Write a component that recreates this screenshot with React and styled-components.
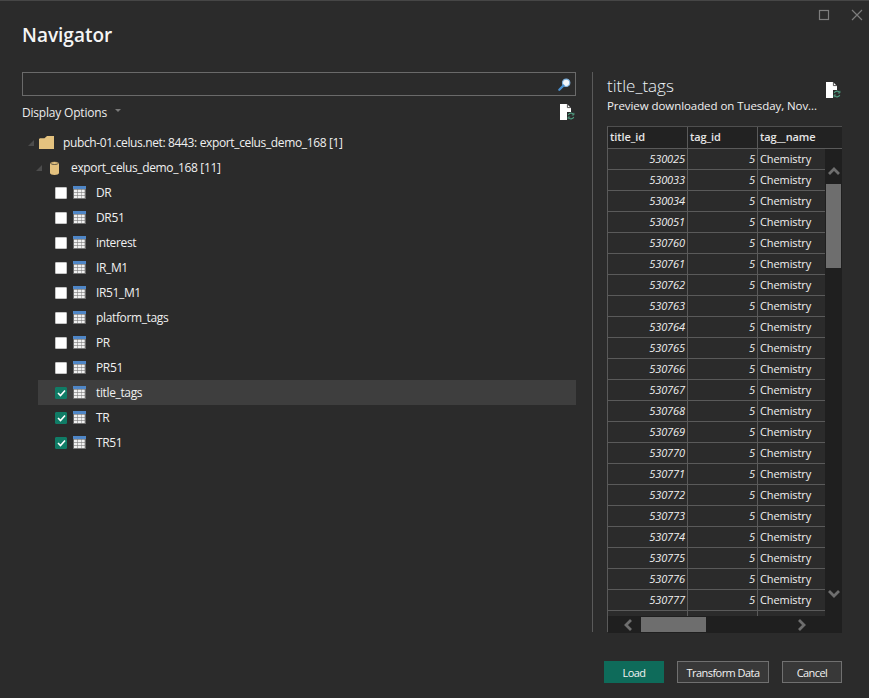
import styled, { createGlobalStyle } from "styled-components";

const GlobalStyle = createGlobalStyle`
  html, body {
    margin: 0;
    padding: 0;
    background: #2b2b2b;
  }
  * {
    box-sizing: border-box;
  }
`;

const Dialog = styled.div`
  width: 869px;
  height: 698px;
  background: #2b2b2b;
  color: #f2f2f2;
  font-family: "Open Sans", "Noto Sans", sans-serif;
  font-size: 12px;
  border-top: 1px solid #464646;
  display: flex;
  flex-direction: column;
  overflow: hidden;
`;

const WindowBar = styled.div`
  height: 28px;
  display: flex;
  justify-content: flex-end;
  align-items: center;
  gap: 21px;
  padding: 0 6px 0 0;
`;

const WindowButton = styled.svg`
  width: 12px;
  height: 12px;
  display: block;
  fill: none;
  stroke: #7d7d7d;
  stroke-width: 1.2;
`;

const Title = styled.h1`
  margin: 0 0 23px 22px;
  height: 20px;
  line-height: 13px;
  font-size: 19px;
  font-weight: 600;
  color: #f5f5f5;
`;

const Main = styled.div`
  display: flex;
  height: 560px;
  padding-left: 22px;
`;

const LeftPane = styled.div`
  width: 554px;
  display: flex;
  flex-direction: column;
`;

const SearchBox = styled.div`
  height: 24px;
  border: 1px solid #6a6a6a;
  display: flex;
  align-items: center;
  justify-content: flex-end;
  padding-right: 4px;
`;

const OptionsRow = styled.div`
  height: 34px;
  display: flex;
  align-items: center;
  justify-content: space-between;
  padding: 0 1px 2px 0;
`;

const DisplayOptions = styled.div`
  display: flex;
  align-items: center;
  gap: 8px;
  font-size: 12px;
  letter-spacing: -0.2px;
  color: #ededed;
`;

const Caret = styled.span`
  width: 0;
  height: 0;
  border-left: 3px solid transparent;
  border-right: 3px solid transparent;
  border-top: 3px solid #7a7a7a;
  margin-top: -3px;
`;

const Tree = styled.div`
  display: flex;
  flex-direction: column;
`;

const TreeRow = styled.div`
  height: 25px;
  flex: none;
  display: flex;
  align-items: center;
  margin-left: 6px;
  padding-left: ${(p) => p.$indent}px;
  font-size: 12px;
  letter-spacing: -0.36px;
  color: #f0f0f0;
`;

const TableRow = styled(TreeRow)`
  margin-left: 16px;
  gap: 6px;
  background: ${(p) => (p.$selected ? "#3e3e3e" : "transparent")};
`;

const Expander = styled.span`
  width: 0;
  height: 0;
  margin-right: ${(p) => p.$gap}px;
  border-style: solid;
  border-width: 0 0 6px 6px;
  border-color: transparent transparent #4c4c4c transparent;
`;

const Check = styled.span`
  width: 12px;
  height: 12px;
  flex: none;
  border-radius: 1px;
  display: flex;
  align-items: center;
  justify-content: center;
  background: ${(p) => (p.$checked ? "#107c66" : "#ffffff")};
  border: 1px solid ${(p) => (p.$checked ? "#107c66" : "#c4c4c4")};
`;

const RowLabel = styled.span`
  margin-left: ${(p) => p.$gap}px;
  white-space: nowrap;
`;

const Divider = styled.div`
  width: 1px;
  height: 560px;
  margin: 0 14px 0 16px;
  background: #5a5a5a;
`;

const RightPane = styled.div`
  width: 235px;
  display: flex;
  flex-direction: column;
`;

const PreviewHead = styled.div`
  height: 54px;
  display: flex;
  justify-content: space-between;
`;

const PreviewTitle = styled.div`
  font-size: 17px;
  line-height: 24px;
  margin-top: 2px;
  font-weight: 300;
  color: #eef3f7;
`;

const PreviewSub = styled.div`
  font-size: 11.5px;
  line-height: 16px;
  letter-spacing: -0.07px;
  color: #f0f0f0;
`;

const HeadIcon = styled.div`
  margin: 10px 1px 0 0;
`;

const GridFrame = styled.div`
  height: 506px;
  display: grid;
  grid-template-columns: 217px 17px;
  grid-template-rows: 22px 467px 17px;
  background: #1f1f1f;
  border-top: 1px solid #4f4f4f;
  border-left: 1px solid #5a5a5a;
`;

const HeaderRow = styled.div`
  grid-column: 1 / 3;
  display: grid;
  grid-template-columns: 80px 70px 1fr;
  border-bottom: 1px solid #5a5a5a;
  background: #222222;
`;

const HeaderCell = styled.div`
  padding-left: 2px;
  line-height: 20px;
  font-size: 11px;
  font-weight: 600;
  letter-spacing: -0.1px;
  color: #e6e6e6;
  border-right: ${(p) => (p.$last ? "none" : "1px solid #5a5a5a")};
`;

const Rows = styled.div`
  overflow: hidden;
  background: #2b2b2b;
`;

const DataRow = styled.div`
  height: 21px;
  display: grid;
  grid-template-columns: 80px 70px 1fr;
  border-bottom: 1px solid #5a5a5a;
`;

const Cell = styled.div`
  padding: 0 2px;
  line-height: 20px;
  font-size: 11px;
  letter-spacing: -0.1px;
  font-style: ${(p) => (p.$num ? "italic" : "normal")};
  text-align: ${(p) => (p.$num ? "right" : "left")};
  color: #f0f0f0;
  border-right: ${(p) => (p.$last ? "none" : "1px solid #5a5a5a")};
`;

const VScroll = styled.div`
  background: #1f1f1f;
  display: flex;
  flex-direction: column;
  align-items: center;
  padding-top: 18px;
`;

const VThumb = styled.div`
  width: 15px;
  height: 84px;
  margin-top: 9px;
  background: #6e6e6e;
`;

const VDown = styled.div`
  margin-top: auto;
  padding-bottom: 18px;
`;

const HScroll = styled.div`
  background: #1f1f1f;
  display: flex;
  align-items: center;
  padding-left: 16px;
`;

const HThumb = styled.div`
  width: 65px;
  height: 15px;
  margin-left: 9px;
  background: #6e6e6e;
`;

const HRight = styled.div`
  margin-left: 92px;
`;

const Corner = styled.div`
  background: #1f1f1f;
`;

const Arrow = styled.svg`
  display: block;
  fill: none;
  stroke: #6e6e6e;
  stroke-width: 2.8;
`;

const Icon = styled.svg`
  display: block;
  flex: none;
`;

const Footer = styled.div`
  display: flex;
  justify-content: flex-end;
  gap: 13px;
  padding: 29px 27px 0 0;
`;

const Button = styled.button`
  height: 22px;
  width: ${(p) => p.$w}px;
  padding: 0;
  font-family: inherit;
  font-size: 11px;
  letter-spacing: -0.55px;
  color: #f2f2f2;
  background: ${(p) => (p.$primary ? "#0e6b5a" : "#383838")};
  border: 1px solid ${(p) => (p.$primary ? "#0e6b5a" : "#707070")};
`;

const tables = [
  ["DR"],
  ["DR51"],
  ["interest"],
  ["IR_M1"],
  ["IR51_M1"],
  ["platform_tags"],
  ["PR"],
  ["PR51"],
  ["title_tags", true, true],
  ["TR", true],
  ["TR51", true],
];

const titleIds = [
  530025, 530033, 530034, 530051, 530760, 530761, 530762, 530763, 530764, 530765, 530766,
  530767, 530768, 530769, 530770, 530771, 530772, 530773, 530774, 530775, 530776, 530777,
];

const TableIcon = () => (
  <Icon width="13" height="13" viewBox="0 0 13 13">
    <rect x="0" y="0" width="13" height="13" fill="#6a6a6a" />
    <rect x="0" y="0" width="13" height="3" fill="#4f86c6" />
    {[3.6, 6.6, 9.6].map((y) =>
      [1, 4.7, 8.4].map((x) => <rect key={`${x}-${y}`} x={x} y={y} width="3.3" height="2.5" fill="#f0f0f0" />)
    )}
  </Icon>
);

const FolderIcon = () => (
  <Icon width="15" height="13" viewBox="0 0 15 13">
    <path d="M0 3 L0 13 L15 13 L15 0 L8 0 L5.5 2.2 L1 2.2 Z" fill="#e4c27f" />
  </Icon>
);

const DbIcon = () => (
  <Icon width="9" height="14" viewBox="0 0 9 14">
    <path d="M0 2 L0 12 C0 14.6 9 14.6 9 12 L9 2 Z" fill="#e4c27f" />
    <ellipse cx="4.5" cy="2" rx="4" ry="1.5" fill="#e4c27f" stroke="#2b2b2b" strokeWidth="0.7" />
  </Icon>
);

const CheckMark = () => (
  <Icon width="9" height="8" viewBox="0 0 9 8">
    <path d="M1 4 L3.5 6.5 L8 1.5" fill="none" stroke="#ffffff" strokeWidth="1.6" />
  </Icon>
);

const SearchIcon = () => (
  <Icon width="13" height="13" viewBox="0 0 14 14">
    <circle cx="8.8" cy="5.2" r="4" fill="#f2f6fa" stroke="#7fb2de" strokeWidth="1.2" />
    <path d="M5.8 8.2 L1.4 12.6" stroke="#4a90d0" strokeWidth="2.4" strokeLinecap="round" />
  </Icon>
);

const RefreshDocIcon = () => (
  <Icon width="15" height="16" viewBox="0 0 15 16">
    <path d="M0 0 L7 0 L11 4 L11 16 L0 16 Z" fill="#ffffff" />
    <path d="M7.4 0.2 L7.4 3.6 L10.8 3.6" fill="none" stroke="#2b2b2b" strokeWidth="0.8" />
    <rect x="7" y="8" width="8" height="8" fill="#2b2b2b" />
    <path d="M8.2 11 A3 3 0 0 1 13.6 10.6 M13.8 13 A3 3 0 0 1 8.4 13.4" fill="none" stroke="#4f9c80" strokeWidth="1.1" />
    <path d="M13.9 8.8 L13.9 11 L11.8 11 M8.1 15.2 L8.1 13 L10.2 13" fill="none" stroke="#4f9c80" strokeWidth="0.9" />
  </Icon>
);

const App = () => {
  return (
    <>
      <GlobalStyle />
      <Dialog>
        <WindowBar>
          <WindowButton viewBox="0 0 12 12">
            <rect x="1.5" y="1.5" width="9" height="9" />
          </WindowButton>
          <WindowButton viewBox="0 0 12 12">
            <path d="M1 1 L11 11 M11 1 L1 11" />
          </WindowButton>
        </WindowBar>
        <Title>Navigator</Title>
        <Main>
          <LeftPane>
            <SearchBox>
              <SearchIcon />
            </SearchBox>
            <OptionsRow>
              <DisplayOptions>
                Display Options
                <Caret />
              </DisplayOptions>
              <RefreshDocIcon />
            </OptionsRow>
            <Tree>
              <TreeRow $indent={0}>
                <Expander $gap={5} />
                <FolderIcon />
                <RowLabel $gap={9}>pubch-01.celus.net: 8443: export_celus_demo_168 [1]</RowLabel>
              </TreeRow>
              <TreeRow $indent={8}>
                <Expander $gap={8} />
                <DbIcon />
                <RowLabel $gap={12}>export_celus_demo_168 [11]</RowLabel>
              </TreeRow>
              {tables.map(([name, checked, selected]) => (
                <TableRow key={name} $indent={17} $selected={selected}>
                  <Check $checked={checked}>{checked && <CheckMark />}</Check>
                  <TableIcon />
                  <RowLabel $gap={4}>{name}</RowLabel>
                </TableRow>
              ))}
            </Tree>
          </LeftPane>
          <Divider />
          <RightPane>
            <PreviewHead>
              <div>
                <PreviewTitle>title_tags</PreviewTitle>
                <PreviewSub>Preview downloaded on Tuesday, Nov...</PreviewSub>
              </div>
              <HeadIcon>
                <RefreshDocIcon />
              </HeadIcon>
            </PreviewHead>
            <GridFrame>
              <HeaderRow>
                <HeaderCell>title_id</HeaderCell>
                <HeaderCell>tag_id</HeaderCell>
                <HeaderCell $last>tag__name</HeaderCell>
              </HeaderRow>
              <Rows>
                {[...titleIds, ""].map((id) => (
                  <DataRow key={id}>
                    <Cell $num>{id}</Cell>
                    <Cell $num>{id && 5}</Cell>
                    <Cell $last>{id && "Chemistry"}</Cell>
                  </DataRow>
                ))}
              </Rows>
              <VScroll>
                <Arrow width="12" height="8" viewBox="0 0 12 8">
                  <path d="M1 7 L6 2 L11 7" />
                </Arrow>
                <VThumb />
                <VDown>
                  <Arrow width="12" height="8" viewBox="0 0 12 8">
                    <path d="M1 1 L6 6 L11 1" />
                  </Arrow>
                </VDown>
              </VScroll>
              <HScroll>
                <Arrow width="8" height="12" viewBox="0 0 8 12">
                  <path d="M7 1 L2 6 L7 11" />
                </Arrow>
                <HThumb />
                <HRight>
                  <Arrow width="8" height="12" viewBox="0 0 8 12">
                    <path d="M1 1 L6 6 L1 11" />
                  </Arrow>
                </HRight>
              </HScroll>
              <Corner />
            </GridFrame>
          </RightPane>
        </Main>
        <Footer>
          <Button $primary $w={60}>Load</Button>
          <Button $w={92}>Transform Data</Button>
          <Button $w={60}>Cancel</Button>
        </Footer>
      </Dialog>
    </>
  );
};

export default App;
